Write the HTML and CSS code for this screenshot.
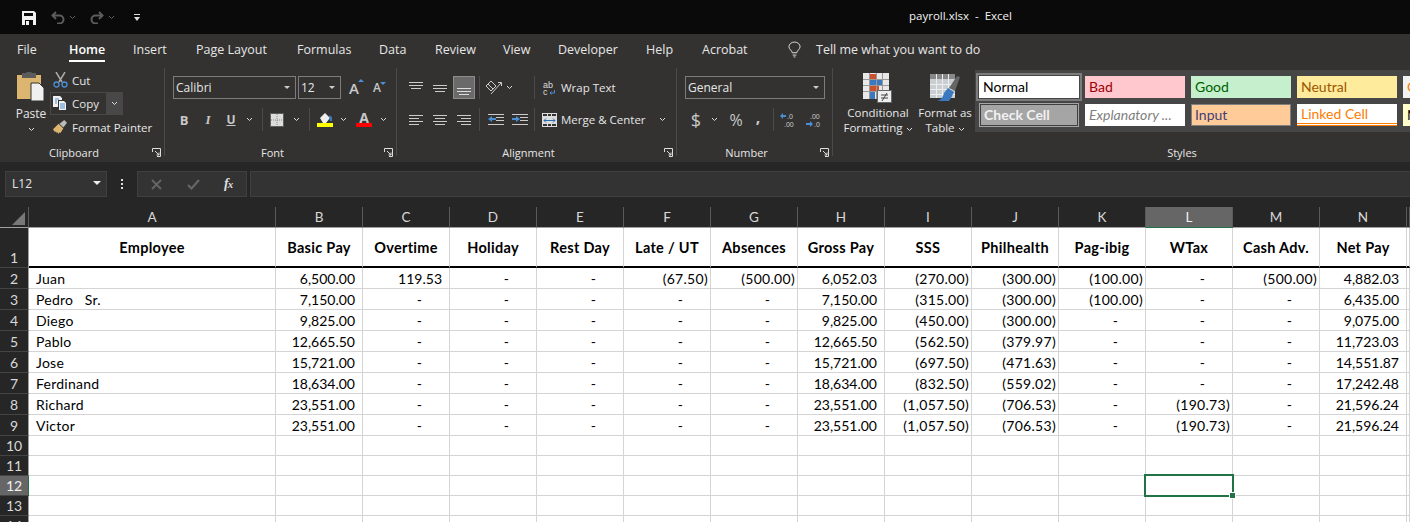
FILE: index.html
```html
<!DOCTYPE HTML>
<html>
<head>
<title>payroll.xlsx - Excel</title>
<link rel="stylesheet" href="styles.css">
</head>
<body>

<div class="titlebar">
    <div class="qat">
        <svg class="save" width="14" height="14" viewBox="0 0 14 14"><path fill="#f2f2f2" d="M0 0h12l2 2v12H0z"/><path fill="#0a0a0a" d="M2 2h9v3H2zM3 9h8v5H3z"/><path fill="#f2f2f2" d="M4 10h3v4H4z"/></svg>
        <svg class="undo" width="14" height="13" viewBox="0 0 14 13"><path fill="none" stroke="#5c5c5c" stroke-width="2" d="M5 1L1.500 4.500 5 8M2 4.500h6.500a4 4 0 0 1 0 8H6"/></svg>
        <svg class="tiny" width="7" height="5" viewBox="0 0 7 5"><path fill="none" stroke="#5c5c5c" d="M1 1l2.500 2.500L6 1"/></svg>
        <svg class="redo" width="14" height="13" viewBox="0 0 14 13"><path fill="none" stroke="#5c5c5c" stroke-width="2" d="M9 1l3.500 3.500L9 8M12 4.500H5.500a4 4 0 0 0 0 8H8"/></svg>
        <svg class="tiny" width="7" height="5" viewBox="0 0 7 5"><path fill="none" stroke="#5c5c5c" d="M1 1l2.500 2.500L6 1"/></svg>
        <svg class="custom" width="6" height="7" viewBox="0 0 6 7"><path fill="#ddd" d="M0 0h6v1H0zM0 3h6L3 7z"/></svg>
    </div>
    <div class="doc">payroll.xlsx&nbsp; - &nbsp;Excel</div>
</div>

<div class="tabs">
    <span>File</span>
    <span class="active">Home</span>
    <span>Insert</span>
    <span>Page Layout</span>
    <span>Formulas</span>
    <span>Data</span>
    <span>Review</span>
    <span>View</span>
    <span>Developer</span>
    <span>Help</span>
    <span>Acrobat</span>
    <svg class="bulb" width="13" height="17" viewBox="0 0 14 17"><path fill="none" stroke="#e6e6e6" d="M4.500 12c0-2.500-3.500-3.500-3.500-6.500a6 5 0 0 1 12 0c0 3-3.500 4-3.500 6.500zM5 14.500h4M6 16.500h2"/></svg>
    <span>Tell me what you want to do</span>
</div>

<div class="ribbon">

    <div class="group clipboard">
        <div class="body clip-body">
            <div class="paste">
                <svg width="30" height="30" viewBox="0 0 30 30"><path fill="#dcb670" d="M1 3h24v24H1z"/><path fill="#5c5c5c" d="M6 1h4l1-1h4l1 1h4v5H6z"/><path fill="#f0f0f0" stroke="#333" d="M15 11h8l5 5v13H15z"/></svg>
                <div>Paste</div>
                <svg class="chev" width="7" height="5" viewBox="0 0 7 5"><path d="M1 1l2.500 2.500L6 1"/></svg>
            </div>
            <div class="clip-list">
                <div class="clip-row">
                    <svg width="15" height="16" viewBox="0 0 15 16"><path fill="none" stroke="#aaa" stroke-width="1.500" d="M3 0l6 10M12 0L6 10"/><circle cx="3.500" cy="12.500" r="2.500" fill="none" stroke="#4a8fd6" stroke-width="1.300"/><circle cx="11.500" cy="12.500" r="2.500" fill="none" stroke="#4a8fd6" stroke-width="1.300"/></svg>
                    Cut
                </div>
                <div class="clip-row copy">
                    <svg width="15" height="15" viewBox="0 0 15 15"><path fill="#f0f0f0" d="M0 0h7l2 2v9H0z"/><path fill="#333" d="M5 4h6l3 3v8H5z"/><path fill="#f0f0f0" d="M6 5h5l2 2v7H6z"/><path stroke="#4a8fd6" d="M2 3h4M2 5h2M2 7h2M7 8h5M7 10h5M7 12h5"/></svg>
                    Copy
                    <span class="copy-drop"><svg class="chev" width="7" height="5" viewBox="0 0 7 5"><path d="M1 1l2.500 2.500L6 1"/></svg></span>
                </div>
                <div class="clip-row">
                    <svg width="15" height="14" viewBox="0 0 16 15"><path fill="#dcb670" d="M0 10l6-6 5 5-3 5-1-1-1 2-1-2-1 1-1-2-1 1z"/><path fill="#bbb" d="M7 4l5-4 3 3-4 5z"/></svg>
                    Format Painter
                </div>
            </div>
        </div>
        <div class="foot"><span class="label">Clipboard</span><svg class="launch" width="9" height="9" viewBox="0 0 9 9"><path fill="none" stroke="#ddd" d="M.5 4V.5h8v8H5M3 3l4 4M7 4.500V7H4.500"/></svg></div>
    </div>

    <div class="group font">
        <div class="body">
            <div class="row">
                <div class="combo name">Calibri<i class="drop"></i></div>
                <div class="combo size">12<i class="drop"></i></div>
                <div class="grow">A<i class="up"></i></div>
                <div class="shrink">A<i class="down"></i></div>
            </div>
            <div class="row pad">
                <span class="btn w24 b">B</span>
                <span class="btn w24 it">I</span>
                <span class="btn w22 u">U</span>
                <span class="btn w14"><svg class="chev" width="7" height="5" viewBox="0 0 7 5"><path d="M1 1l2.500 2.500L6 1"/></svg></span>
                <span class="sep m6"></span>
                <span class="btn w24 m2">
                    <svg width="14" height="14" viewBox="0 0 14 14"><path fill="#ddd" d="M1 1h12v12H1z"/><path fill="none" stroke="#888" stroke-dasharray="1 1" d="M.5.5h13v13H.5zM7 1v12M1 7h12"/></svg>
                </span>
                <span class="btn w14"><svg class="chev" width="7" height="5" viewBox="0 0 7 5"><path d="M1 1l2.500 2.500L6 1"/></svg></span>
                <span class="sep m6"></span>
                <span class="btn w24 m3">
                    <svg width="16" height="15" viewBox="0 0 16 15"><path fill="#eee" d="M3 6l5-5 5 5-4 5H6z"/><path fill="#3a78c0" d="M12 3l3 2v4h-2z"/><path fill="#ff0" d="M0 11h16v4H0z"/></svg>
                </span>
                <span class="btn w12"><svg class="chev" width="7" height="5" viewBox="0 0 7 5"><path d="M1 1l2.500 2.500L6 1"/></svg></span>
                <span class="btn w24 m3 color-a">A<i></i></span>
                <span class="btn w14"><svg class="chev" width="7" height="5" viewBox="0 0 7 5"><path d="M1 1l2.500 2.500L6 1"/></svg></span>
            </div>
        </div>
        <div class="foot"><span class="label">Font</span><svg class="launch" width="9" height="9" viewBox="0 0 9 9"><path fill="none" stroke="#ddd" d="M.5 4V.5h8v8H5M3 3l4 4M7 4.500V7H4.500"/></svg></div>
    </div>

    <div class="group alignment">
        <div class="body">
            <div class="row pad">
                <span class="btn w24"><svg width="14" height="14" viewBox="0 0 14 14"><path stroke="#ccc" d="M0 1.500h14M0 4.500h14M2 7.500h10"/></svg></span>
                <span class="btn w24"><svg width="14" height="14" viewBox="0 0 14 14"><path stroke="#ccc" d="M0 4.500h14M0 7.500h14M2 10.500h10"/></svg></span>
                <span class="btn w24 on"><svg width="14" height="14" viewBox="0 0 14 14"><path stroke="#ddd" d="M0 7.500h14M0 10.500h14M2 13.500h10"/></svg></span>
                <span class="sep m3"></span>
                <span class="btn w50 m4">
                    <svg width="17" height="15" viewBox="0 0 17 15"><path fill="none" stroke="#ccc" d="M1 6l5-5 5 5-5 5zM3 4l5 5M6 14L16 3M13 2.500h3.500V6"/></svg>
                    <svg class="chev" width="7" height="5" viewBox="0 0 7 5"><path d="M1 1l2.500 2.500L6 1"/></svg>
                </span>
                <span class="sep"></span>
                <span class="wide">
                    <svg class="glyphs" width="13" height="16" viewBox="0 0 13 16"><text x="0" y="8" class="ab">ab</text><text x="0" y="15" class="ab">c</text><path fill="none" stroke="#4a8fd6" d="M11.500 10v3H7M8.500 11.500L7 13l1.500 1.500"/></svg>
                    Wrap Text
                </span>
            </div>
            <div class="row pad">
                <span class="btn w24"><svg width="14" height="12" viewBox="0 0 14 12"><path stroke="#ccc" d="M0 1.500h14M0 4.500h10M0 7.500h14M0 10.500h10"/></svg></span>
                <span class="btn w24"><svg width="14" height="12" viewBox="0 0 14 12"><path stroke="#ccc" d="M0 1.500h14M2 4.500h10M0 7.500h14M2 10.500h10"/></svg></span>
                <span class="btn w24"><svg width="14" height="12" viewBox="0 0 14 12"><path stroke="#ccc" d="M0 1.500h14M4 4.500h10M0 7.500h14M4 10.500h10"/></svg></span>
                <span class="sep m3"></span>
                <span class="btn w24 m4"><svg width="16" height="12" viewBox="0 0 16 12"><path stroke="#ccc" d="M0 .5h16M8 3.500h8M8 6.500h8M0 10.500h16"/><path fill="#4a8fd6" d="M0 5l4-3v2h4v2H4v2z"/></svg></span>
                <span class="btn w24"><svg width="16" height="12" viewBox="0 0 16 12"><path stroke="#ccc" d="M0 .5h16M8 3.500h8M8 6.500h8M0 10.500h16"/><path fill="#4a8fd6" d="M8 5L4 2v2H0v2h4v2z"/></svg></span>
                <span class="sep m2"></span>
                <span class="wide merge">
                    <svg width="15" height="14" viewBox="0 0 15 14"><path fill="#ddd" d="M0 0h15v14H0z"/><path fill="#333" d="M1 1h4v2H1zM6 1h3v2H6zM10 1h4v2h-4zM1 11h4v2H1zM6 11h3v2H6zM10 11h4v2h-4z"/><path stroke="#2b6cb0" d="M2 7.500h11M4 5.500l-2 2 2 2M11 5.500l2 2-2 2" fill="none"/></svg>
                    Merge &amp; Center
                    <svg class="chev merge-chev" width="7" height="5" viewBox="0 0 7 5"><path d="M1 1l2.500 2.500L6 1"/></svg>
                </span>
            </div>
        </div>
        <div class="foot"><span class="label">Alignment</span><svg class="launch" width="9" height="9" viewBox="0 0 9 9"><path fill="none" stroke="#ddd" d="M.5 4V.5h8v8H5M3 3l4 4M7 4.500V7H4.500"/></svg></div>
    </div>

    <div class="group number">
        <div class="body">
            <div class="row">
                <div class="combo general">General<i class="drop"></i></div>
            </div>
            <div class="row pad">
                <span class="btn w24 sym big">$</span>
                <span class="btn w12"><svg class="chev" width="7" height="5" viewBox="0 0 7 5"><path d="M1 1l2.500 2.500L6 1"/></svg></span>
                <span class="btn w22 m5 sym">%</span>
                <span class="btn w22 sym comma">,</span>
                <span class="sep m4"></span>
                <span class="btn w24 m2"><svg class="glyphs" width="16" height="16" viewBox="0 0 16 16"><text x="7" y="7" class="dec">.0</text><text x="4" y="15" class="dec">.00</text><path fill="#4a8fd6" d="M0 4l3-3v2h3v2H3v2z"/></svg></span>
                <span class="btn w24 m2"><svg class="glyphs" width="16" height="16" viewBox="0 0 16 16"><text x="4" y="7" class="dec">.00</text><text x="8" y="15" class="dec">.0</text><path fill="#4a8fd6" d="M7 12L4 9v2H0v2h4v2z"/></svg></span>
            </div>
        </div>
        <div class="foot"><span class="label">Number</span><svg class="launch" width="9" height="9" viewBox="0 0 9 9"><path fill="none" stroke="#ddd" d="M.5 4V.5h8v8H5M3 3l4 4M7 4.500V7H4.500"/></svg></div>
    </div>

    <div class="group styles">
        <div class="styles-body">
            <div class="big-btn cond">
                <svg width="30" height="30" viewBox="0 0 30 30"><path fill="#e8e8e8" d="M0 0h26v26H0z"/><path fill="#c9512e" d="M7 1h6v5H7zM7 13h9v5H7z"/><path fill="#3a78c0" d="M7 7h12v5H7zM7 19h5v7H7z"/><path stroke="#999" d="M0 6.500h26M0 12.500h26M0 18.500h26M6.500 0v26M13.500 0v26M19.500 0v26" fill="none"/><path fill="#eee" stroke="#666" d="M14.500 17.500h14v12h-14z"/><path stroke="#444" d="M18 22h7M18 25h7M24 20l-5 8"/></svg>
                <div>Conditional</div>
                <div>Formatting <svg class="chev" width="7" height="5" viewBox="0 0 7 5"><path d="M1 1l2.500 2.500L6 1"/></svg></div>
            </div>
            <div class="big-btn fmt">
                <svg width="30" height="30" viewBox="0 0 30 30"><path fill="#c9ced3" d="M0 1h25v24H0z"/><path fill="#888" d="M0 1h25v5H0z"/><path stroke="#eee" d="M0 11.500h25M0 16.500h25M0 21.500h25M6.500 1v24M12.500 1v24M18.500 1v24"/><path fill="#666" d="M19 15l8-12 3 1-5 14z"/><path fill="#3a78c0" d="M18 15l6 4-3 6-2 3H7c4-1 6-4 7-8z"/></svg>
                <div>Format as</div>
                <div>Table <svg class="chev" width="7" height="5" viewBox="0 0 7 5"><path d="M1 1l2.500 2.500L6 1"/></svg></div>
            </div>
            <div class="gallery">
                <div class="st normal">Normal</div>
                <div class="st bad">Bad</div>
                <div class="st good">Good</div>
                <div class="st neutral">Neutral</div>
                <div class="st calc">C</div>
                <div class="st check">Check Cell</div>
                <div class="st expl">Explanatory ...</div>
                <div class="st input">Input</div>
                <div class="st linked">Linked Cell</div>
                <div class="st note">N</div>
            </div>
        </div>
        <div class="foot"><span class="label style-label">Styles</span></div>
    </div>
</div>

<div class="formula">
    <div class="namebox">L12<i class="drop white"></i></div>
    <div class="dots"><i></i><i></i><i></i></div>
    <div class="fx-box">
        <svg width="12" height="11" viewBox="0 0 12 11"><path stroke="#666" stroke-width="1.800" d="M1 1l9 9M10 1l-9 9"/></svg>
        <svg width="13" height="11" viewBox="0 0 13 11"><path fill="none" stroke="#666" stroke-width="2.200" d="M1 6l3.500 3.500L12 1"/></svg>
        <span class="fx">f<sub>x</sub></span>
    </div>
    <div class="fx-input"></div>
</div>

<table class="sheet">
    <colgroup>
        <col class="c-head"><col class="c-a">
        <col class="c-n"><col class="c-n"><col class="c-n"><col class="c-n"><col class="c-n"><col class="c-n"><col class="c-n">
        <col class="c-n"><col class="c-n"><col class="c-n"><col class="c-n"><col class="c-n"><col class="c-n">
        <col class="c-o">
    </colgroup>
    <tr class="cols">
        <th class="corner"><i></i></th>
        <th>A</th><th>B</th><th>C</th><th>D</th><th>E</th><th>F</th><th>G</th><th>H</th><th>I</th><th>J</th><th>K</th><th class="sel">L</th><th>M</th><th>N</th><th></th>
    </tr>
    <tr class="r-top">
        <th class="rh">1</th>
        <td>Employee</td><td>Basic Pay</td><td>Overtime</td><td>Holiday</td><td>Rest Day</td><td>Late / UT</td><td>Absences</td><td>Gross Pay</td><td>SSS</td><td>Philhealth</td><td>Pag-ibig</td><td>WTax</td><td>Cash Adv.</td><td>Net Pay</td><td></td>
    </tr>
    <tr>
        <th class="rh">2</th>
        <td class="t">Juan</td><td class="n">6,500.00</td><td class="n">119.53</td><td class="d">-</td><td class="d">-</td><td class="p">(67.50)</td><td class="p">(500.00)</td><td class="n">6,052.03</td><td class="p">(270.00)</td><td class="p">(300.00)</td><td class="p">(100.00)</td><td class="d">-</td><td class="p">(500.00)</td><td class="n">4,882.03</td><td></td>
    </tr>
    <tr>
        <th class="rh">3</th>
        <td class="t">Pedro&nbsp;&nbsp; Sr.</td><td class="n">7,150.00</td><td class="d">-</td><td class="d">-</td><td class="d">-</td><td class="d">-</td><td class="d">-</td><td class="n">7,150.00</td><td class="p">(315.00)</td><td class="p">(300.00)</td><td class="p">(100.00)</td><td class="d">-</td><td class="d">-</td><td class="n">6,435.00</td><td></td>
    </tr>
    <tr>
        <th class="rh">4</th>
        <td class="t">Diego</td><td class="n">9,825.00</td><td class="d">-</td><td class="d">-</td><td class="d">-</td><td class="d">-</td><td class="d">-</td><td class="n">9,825.00</td><td class="p">(450.00)</td><td class="p">(300.00)</td><td class="d">-</td><td class="d">-</td><td class="d">-</td><td class="n">9,075.00</td><td></td>
    </tr>
    <tr>
        <th class="rh">5</th>
        <td class="t">Pablo</td><td class="n">12,665.50</td><td class="d">-</td><td class="d">-</td><td class="d">-</td><td class="d">-</td><td class="d">-</td><td class="n">12,665.50</td><td class="p">(562.50)</td><td class="p">(379.97)</td><td class="d">-</td><td class="d">-</td><td class="d">-</td><td class="n">11,723.03</td><td></td>
    </tr>
    <tr>
        <th class="rh">6</th>
        <td class="t">Jose</td><td class="n">15,721.00</td><td class="d">-</td><td class="d">-</td><td class="d">-</td><td class="d">-</td><td class="d">-</td><td class="n">15,721.00</td><td class="p">(697.50)</td><td class="p">(471.63)</td><td class="d">-</td><td class="d">-</td><td class="d">-</td><td class="n">14,551.87</td><td></td>
    </tr>
    <tr>
        <th class="rh">7</th>
        <td class="t">Ferdinand</td><td class="n">18,634.00</td><td class="d">-</td><td class="d">-</td><td class="d">-</td><td class="d">-</td><td class="d">-</td><td class="n">18,634.00</td><td class="p">(832.50)</td><td class="p">(559.02)</td><td class="d">-</td><td class="d">-</td><td class="d">-</td><td class="n">17,242.48</td><td></td>
    </tr>
    <tr>
        <th class="rh">8</th>
        <td class="t">Richard</td><td class="n">23,551.00</td><td class="d">-</td><td class="d">-</td><td class="d">-</td><td class="d">-</td><td class="d">-</td><td class="n">23,551.00</td><td class="p">(1,057.50)</td><td class="p">(706.53)</td><td class="d">-</td><td class="p">(190.73)</td><td class="d">-</td><td class="n">21,596.24</td><td></td>
    </tr>
    <tr>
        <th class="rh">9</th>
        <td class="t">Victor</td><td class="n">23,551.00</td><td class="d">-</td><td class="d">-</td><td class="d">-</td><td class="d">-</td><td class="d">-</td><td class="n">23,551.00</td><td class="p">(1,057.50)</td><td class="p">(706.53)</td><td class="d">-</td><td class="p">(190.73)</td><td class="d">-</td><td class="n">21,596.24</td><td></td>
    </tr>
    <tr class="r-low">
        <th class="rh">10</th>
        <td></td><td></td><td></td><td></td><td></td><td></td><td></td><td></td><td></td><td></td><td></td><td></td><td></td><td></td><td></td>
    </tr>
    <tr class="r-low">
        <th class="rh">11</th>
        <td></td><td></td><td></td><td></td><td></td><td></td><td></td><td></td><td></td><td></td><td></td><td></td><td></td><td></td><td></td>
    </tr>
    <tr class="r-low">
        <th class="rh sel-row">12</th>
        <td></td><td></td><td></td><td></td><td></td><td></td><td></td><td></td><td></td><td></td><td></td><td class="active-cell"><div class="cursor"><i></i></div></td><td></td><td></td><td></td>
    </tr>
    <tr class="r-low">
        <th class="rh">13</th>
        <td></td><td></td><td></td><td></td><td></td><td></td><td></td><td></td><td></td><td></td><td></td><td></td><td></td><td></td><td></td>
    </tr>
    <tr class="r-low">
        <th class="rh">14</th>
        <td></td><td></td><td></td><td></td><td></td><td></td><td></td><td></td><td></td><td></td><td></td><td></td><td></td><td></td><td></td>
    </tr>
</table>

</body>
</html>
```

FILE: styles.css
```css
html, body {margin: 0; height: 522px; overflow: hidden; background: #262626;}
body {font-family: "Open Sans", sans-serif; font-size: 12.5px; color: #e6e6e6; width: 1410px;}
svg {display: block; flex: none;}

/* title bar */
.titlebar {display: flex; align-items: center; height: 34px; background: #0a0a0a;}
.qat {display: flex; align-items: center; width: 909px; padding: 1px 0 0 22px; box-sizing: border-box;}
.qat .undo {margin-left: 15px;}
.qat .tiny {margin-left: 4px;}
.qat .redo {margin-left: 14px;}
.qat .custom {margin-left: 19px;}
.doc {font-size: 11.5px; color: #f2f2f2; padding-bottom: 3px;}

/* tabs */
.tabs {display: grid; grid-template-columns: 52px 64px 63px 101px 82px 56px 68px 55px 88px 56px 86px 28px auto; align-items: center; height: 28px; padding-left: 17px; background: #333231;}
.tabs span {justify-self: start; line-height: 31px; height: 28px; box-sizing: border-box;}
.tabs .active {font-weight: 600; color: #fff; border-bottom: 2px solid #fff;}
.bulb {margin-top: 3px;}

/* ribbon */
.ribbon {display: flex; height: 100px; background: #333231;}
.group {position: relative; margin-top: 6px; height: 88px; border-right: 1px solid #4a4a4a; display: flex; flex-direction: column; box-sizing: border-box; flex: none; font-size: 11.5px;}
.clipboard {width: 165px;}
.font {width: 232px;}
.alignment {width: 280px;}
.number {width: 156px;}
.styles {flex: 1; border-right: 0; min-width: 0;}
.body {flex: none; height: 77px; padding-top: 8px; box-sizing: border-box; display: flex; flex-direction: column; gap: 9px;}
.foot {flex: none; display: flex; align-items: center; height: 14px; font-size: 11px; color: #e6e6e6;}
.label {flex: 1; text-align: center;}
.launch {margin: 0 3px 0 4px;}
.row {display: flex; align-items: center; height: 23px;}
.row.pad {padding-left: 7px;}
.chev {fill: none; stroke: #ddd;}
.glyphs {overflow: visible;}

.clip-body {flex-direction: row; padding: 0; gap: 0;}
.paste {width: 36px; margin-left: 13px; display: flex; flex-direction: column; align-items: center; padding-top: 4px; font-size: 12px;}
.paste > div {margin-top: 3px; line-height: 17px;}
.paste .chev {margin-top: 5px;}
.clip-list {margin-left: 1px; width: 73px;}
.clip-row {display: flex; align-items: center; gap: 4px; height: 24px; padding-left: 3px; white-space: nowrap; box-sizing: border-box;}
.copy {border: 1px solid #484848; height: 23px; padding-left: 2px; position: relative;}
.copy-drop {position: absolute; right: 0; top: 0; bottom: 0; width: 16px; background: #484848; display: flex; align-items: center; justify-content: center;}

.combo {position: relative; height: 23px; line-height: 21px; border: 1px solid #7c7c7c; box-sizing: border-box; padding-left: 2px; font-size: 12px;}
.name {width: 123px; margin-left: 8px;}
.size {width: 43px; margin-left: 2px;}
.general {width: 140px; margin-left: 8px;}
.drop {position: absolute; right: 5px; top: 9px; border: 3px solid transparent; border-top: 3px solid #ccc; border-bottom: 0;}
.grow, .shrink {position: relative; color: #c8c8c8; font-weight: 600;}
.grow {margin-left: 8px; font-size: 15px; width: 24px;}
.shrink {font-size: 12px; width: 14px;}
.grow i, .shrink i {position: absolute; top: 1px; border: 3px solid transparent;}
.grow i {left: 9px; border-bottom: 3px solid #4a8fd6; border-top: 0;}
.shrink i {left: 7px; top: 3px; border-top: 3px solid #4a8fd6; border-bottom: 0;}

.btn {display: flex; align-items: center; justify-content: center; height: 23px; flex: none; box-sizing: border-box;}
.w12 {width: 12px;}
.w14 {width: 14px;}
.w22 {width: 22px;}
.w24 {width: 24px;}
.w50 {width: 50px; justify-content: flex-start; gap: 4px; padding-left: 1px;}
.m2 {margin-left: 2px;}
.m3 {margin-left: 3px;}
.m4 {margin-left: 4px;}
.m5 {margin-left: 5px;}
.m6 {margin-left: 6px;}
.sep {width: 1px; height: 23px; background: #4a4a4a; flex: none;}
.b {font-weight: 700; color: #c8c8c8; font-size: 13px;}
.it {font-style: italic; font-weight: 600; color: #c8c8c8; font-size: 13px; font-family: "Liberation Serif", serif;}
.u {font-weight: 700; color: #c8c8c8; text-decoration: underline; font-size: 12px;}
.color-a {position: relative; font-weight: 700; color: #c8c8c8; font-size: 14px; padding-bottom: 4px;}
.color-a i {position: absolute; left: 4px; right: 4px; bottom: 4px; height: 4px; background: #f00;}

.on {background: #6a6a6a; border: 1px solid #8c8c8c; width: 22px; margin-left: 1px; margin-right: 1px;}
.wide {display: flex; align-items: center; gap: 5px; margin-left: 8px; white-space: nowrap;}
.merge {margin-left: 7px; gap: 4px;}
.merge-chev {margin-left: 9px;}
.ab {font-size: 9px; fill: #ddd; font-family: "Liberation Sans", sans-serif;}

.sym {font-size: 16px; color: #c8c8c8;}
.big {font-size: 18px;}
.comma {font-weight: 700; padding-bottom: 6px;}
.dec {font-size: 7px; fill: #ccc; font-family: "Liberation Sans", sans-serif;}

/* styles gallery */
.styles-body {display: flex; flex: none; height: 77px; padding-left: 10px;}
.big-btn {width: 70px; display: flex; flex-direction: column; align-items: center; font-size: 11.5px; line-height: 15px; white-space: nowrap;}
.big-btn svg:first-child {margin: 5px 0 2px;}
.big-btn div {display: flex; align-items: center; gap: 3px;}
.fmt {width: 54px; margin-left: 5px;}
.gallery {margin: 2px 0 0 3px; height: 62px; flex: 1; min-width: 0; background: #464646; display: grid; grid-template-columns: repeat(5, 100px); grid-auto-rows: 22px; gap: 6px; padding: 6px 0 6px 4px; box-sizing: border-box; overflow: hidden; font-family: Lato, sans-serif; font-size: 14px;}
.st {line-height: 22px; padding-left: 4px; box-sizing: border-box; white-space: nowrap; overflow: hidden;}
.normal {background: #fff; color: #000; outline: 2px solid #7c7c7c; outline-offset: 1px;}
.bad {background: #ffc7ce; color: #9c0006;}
.good {background: #c6efce; color: #006100;}
.neutral {background: #ffeb9c; color: #9c5700;}
.calc {background: #f2f2f2; color: #fa7d00;}
.check {background: #a5a5a5; color: #f2f2f2; font-weight: 700; border: 1px solid #3f3f3f; outline: 1px solid #a5a5a5; line-height: 20px; margin: 0 1px; padding-left: 3px;}
.expl {background: #fff; color: #7f7f7f; font-style: italic;}
.input {background: #ffcc99; color: #3f3f76; border: 1px solid #7f7f7f; line-height: 20px; padding-left: 3px;}
.linked {background: #fff; color: #fa7d00; border-bottom: 3px double #ff8001; line-height: 20px;}
.note {background: #ffffcc; color: #000;}
.style-label {padding-left: 121px;}

/* formula bar */
.formula {display: flex; height: 45px; padding: 9px 0 10px 5px; box-sizing: border-box; background: #262626;}
.namebox {position: relative; width: 102px; background: #333; border: 1px solid #404040; box-sizing: border-box; line-height: 24px; padding-left: 6px; font-size: 12px;}
.drop.white {right: 5px; top: 9px; border-width: 4px; border-top-color: #eee;}
.dots {width: 30px; display: flex; flex-direction: column; align-items: center; justify-content: center; gap: 2px;}
.dots i {width: 2px; height: 2px; background: #ddd;}
.fx-box {width: 110px; background: #333; border: 1px solid #404040; box-sizing: border-box; display: flex; align-items: center; gap: 24px; padding-left: 13px;}
.fx {font-family: "Liberation Serif", serif; font-style: italic; font-weight: 700; font-size: 14px; color: #ddd; line-height: 12px;}
.fx sub {font-size: 11px; vertical-align: baseline; margin-left: -1px;}
.fx-input {flex: 1; margin-left: 3px; background: #333; border: 1px solid #404040; border-right: 0;}

/* sheet */
.sheet {table-layout: fixed; width: 1410px; border-collapse: separate; border-spacing: 0; font-family: Lato, sans-serif; font-size: 14px; color: #000; background: #fff;}
.c-head {width: 29px;}
.c-a {width: 247px;}
.c-n {width: 87px;}
.c-o {width: 3px;}
.sheet td {height: 21px; padding: 1px 0 0; box-sizing: border-box; border-right: 1px solid #d4d4d4; border-bottom: 1px solid #d4d4d4; white-space: nowrap; line-height: 19px; vertical-align: middle;}
.sheet th {font-weight: 400; padding: 0; background: #262626; color: #d8d8d8; box-sizing: border-box; border-right: 1px solid #5a5a5a;}
.cols th {height: 21px; padding-top: 1px; border-bottom: 1px solid #a0a0a0; font-size: 13.5px; line-height: 19px;}
.corner {position: relative;}
.corner i {position: absolute; right: 3px; bottom: 2px; width: 0; height: 0; border-left: 13px solid transparent; border-bottom: 13px solid #787878;}
.cols .sel {background: #666; color: #f2f2f2; border-bottom: 1px solid #217346;}
.rh {height: 21px; font-size: 14px; line-height: 19px; vertical-align: bottom;}
.sheet .rh {border-right: 1px solid #a0a0a0; border-bottom: 1px solid #444;}
.sheet .sel-row {background: #666; color: #f2f2f2; border-right: 1px solid #217346;}
.r-top td {height: 40px; font-weight: 700; font-size: 14.5px; letter-spacing: .3px; text-align: center; border-bottom: 2px solid #000;}
.r-top .rh {height: 40px;}
.r-low td, .r-low .rh {height: 20px;}
.sheet .t {padding-left: 7px; letter-spacing: .25px;}
.sheet .n {text-align: right; padding-right: 7px;}
.sheet .p {text-align: right; padding-right: 2px; letter-spacing: .3px;}
.sheet .d {text-align: right; padding-right: 27px;}
.active-cell {position: relative;}
.cursor {position: absolute; left: -2px; top: -2px; width: 90px; height: 23px; border: 2px solid #217346; box-sizing: border-box;}
.cursor i {position: absolute; right: -3px; bottom: -3px; width: 5px; height: 5px; background: #217346; border: 1px solid #fff; box-sizing: content-box; margin: -1px;}
```
